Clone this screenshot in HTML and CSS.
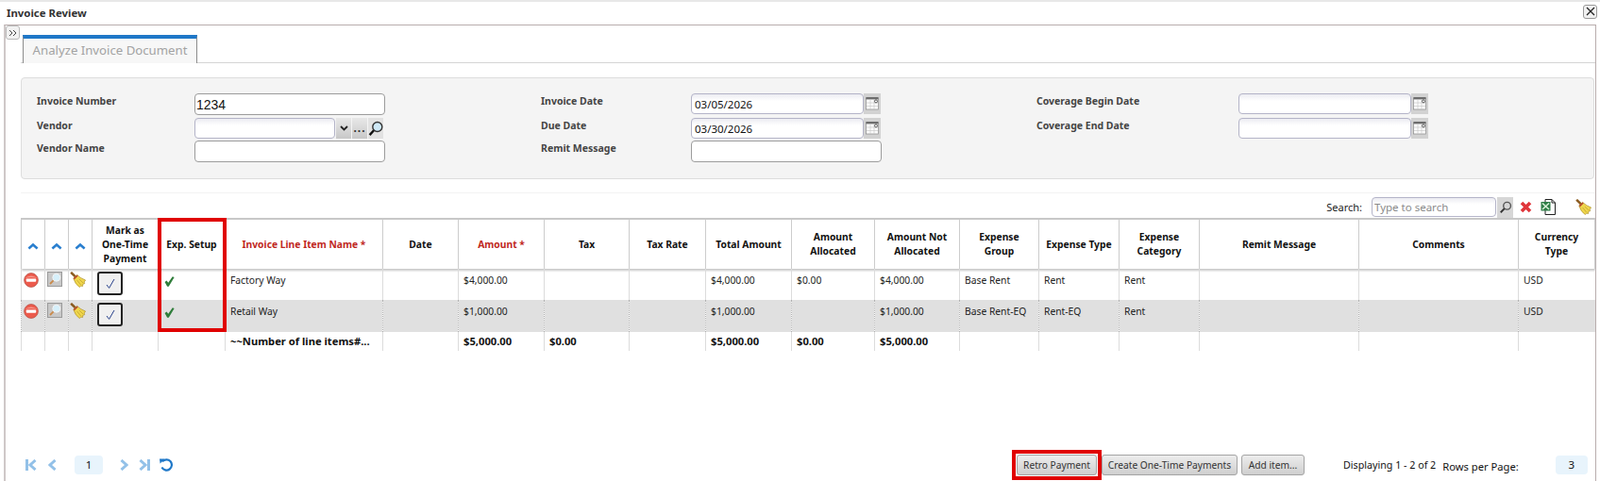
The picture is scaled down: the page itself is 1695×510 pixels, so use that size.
FILE: index.html
```html
<!DOCTYPE html>
<html lang="en">
<head>
<meta charset="utf-8">
<title>Invoice Review</title>
<link rel="stylesheet" href="styles.css">
</head>
<body>
<svg class="sprites" width="0" height="0" aria-hidden="true">
  <symbol id="broom" viewBox="0 0 18 18">
    <path d="M1.2 .8 L6.5 6" stroke="#8a5a1e" stroke-width="2.6" fill="none"/>
    <path d="M4 7.5 L8 3.6 Q12 7.5 17.6 9.6 L16 11.6 L16.6 13.4 L14.6 14 L14.4 16.4 L12.4 16 L11 17.6 Q6 14.5 4 7.5Z" fill="#efd64c" stroke="#a88a24" stroke-width=".7"/>
    <path d="M4 7.5 L8 3.6 L9.2 4.8 L5.2 8.8Z" fill="#b5432c"/>
    <path d="M8 9.5 L12.4 15 M10.5 8.5 L14.8 12.6" stroke="#b89a2c" stroke-width=".7"/>
  </symbol>
  <symbol id="minus" viewBox="0 0 16 16">
    <circle cx="8" cy="8" r="7.4" fill="#ec5a4c" stroke="#b8584e" stroke-width=".8"/>
    <path d="M1.5 6 Q8 1 14.5 6 Q8 4 1.5 6Z" fill="#f59a8e"/>
    <rect x="2.8" y="6.4" width="10.4" height="3.4" rx=".8" fill="#fff"/>
  </symbol>
  <symbol id="zoomBtn" viewBox="0 0 16 16">
    <rect x=".5" y=".5" width="15" height="15" fill="#c8c8c8" stroke="#9a9a9a"/>
    <circle cx="9.8" cy="6.2" r="4" fill="#d6f0fb" stroke="#f4f4f4" stroke-width="1"/>
    <path d="M6.6 9.4 L3 13" stroke="#c98a4a" stroke-width="1.8"/>
  </symbol>
  <symbol id="tick" viewBox="0 0 12 12">
    <path d="M.6 6.6 L2.8 5 L4.6 7.4 L9.6 .4 L11.6 1.2 L5.2 11.6 L3.4 11.6Z" fill="#2f7d3a"/>
  </symbol>
  <symbol id="up" viewBox="0 0 12 8">
    <path d="M1.4 6.4 L6 2.4 L10.6 6.4" fill="none" stroke="#2a7fcf" stroke-width="2.6"/>
  </symbol>
  <symbol id="cal" viewBox="0 0 18 22">
    <rect width="18" height="22" fill="#d2d2d2"/>
    <rect x="2.5" y="5" width="13" height="12" fill="#fbfbfb" stroke="#8a8a8a" stroke-width=".7"/>
    <rect x="2.5" y="4" width="13" height="2.4" fill="#6d6d6d"/>
    <path d="M3 10 H15 M3 13.5 H15 M7 6.4 V17 M11 6.4 V17" stroke="#c4c4c4" stroke-width=".6"/>
    <circle cx="13" cy="8.4" r="1.5" fill="#fff" stroke="#333" stroke-width=".8"/>
  </symbol>
  <symbol id="lens" viewBox="0 0 16 16">
    <circle cx="9.8" cy="6" r="4.4" fill="none" stroke="#555" stroke-width="1.6"/>
    <path d="M6.6 9.2 L2 14" stroke="#333" stroke-width="2.2"/>
  </symbol>
</svg>
<div class="app">
  <header class="titlebar">
    <span class="title">Invoice Review</span>
    <button class="close" type="button" aria-label="Close"><svg width="10" height="10" viewBox="0 0 10 10"><path d="M1 1 L9 9 M9 1 L1 9" stroke="#222" stroke-width="1.3"/></svg></button>
  </header>
  <main class="panel">
    <div class="tabstrip">
      <div class="rail"><button class="expand" type="button" aria-label="Expand"><svg width="10" height="8" viewBox="0 0 10 8"><path d="M1 1 L4 4 L1 7 M5 1 L8 4 L5 7" stroke="#444" fill="none" stroke-width="1"/></svg></button></div>
      <div class="tabrow"><div class="tab">Analyze Invoice Document</div></div>
    </div>

    <section class="form">
      <label class="lbl">Invoice Number</label>
      <div class="field"><input class="inp wide tall plain num" value="1234"></div>
      <label class="lbl">Invoice Date</label>
      <div class="field"><input class="inp date" value="03/05/2026"><svg class="calbtn"><use href="#cal"/></svg></div>
      <label class="lbl">Coverage Begin Date</label>
      <div class="field"><input class="inp date" value=""><svg class="calbtn"><use href="#cal"/></svg></div>

      <label class="lbl">Vendor</label>
      <div class="field">
        <input class="inp vendor" value="">
        <span class="addon"><svg width="9" height="6" viewBox="0 0 9 6"><path d="M1 1 L4.5 4.5 L8 1" fill="none" stroke="#222" stroke-width="1.8"/></svg></span>
        <span class="addon dots">...</span>
        <span class="addon lensbtn"><svg width="16" height="17" viewBox="0 0 16 16"><circle cx="9.8" cy="6" r="5" fill="#cfe9f7" stroke="#333" stroke-width="1.4"/><path d="M6 9.8 L1.6 14.6" stroke="#111" stroke-width="2.4"/></svg></span>
      </div>
      <label class="lbl">Due Date</label>
      <div class="field"><input class="inp date" value="03/30/2026"><svg class="calbtn"><use href="#cal"/></svg></div>
      <label class="lbl">Coverage End Date</label>
      <div class="field"><input class="inp date" value=""><svg class="calbtn"><use href="#cal"/></svg></div>

      <label class="lbl">Vendor Name</label>
      <div class="field"><input class="inp wide tall plain" value=""></div>
      <label class="lbl">Remit Message</label>
      <div class="field"><input class="inp wide tall plain" value=""></div>
    </section>

    <div class="toolbar">
      <span class="searchlbl">Search:</span>
      <input class="inp search" placeholder="Type to search">
      <span class="searchbtn"><svg width="14" height="14"><use href="#lens"/></svg></span>
      <svg class="tool-x" width="13" height="13" viewBox="0 0 13 13"><path d="M2 2 L11 11 M11 2 L2 11" stroke="#e0353a" stroke-width="3.6"/></svg>
      <svg class="tool-xls" width="17" height="17" viewBox="0 0 17 17"><path d="M5 .5 H12 L15.5 4 V16.5 H5Z" fill="#fff" stroke="#222"/><path d="M12 .5 V4 H15.5" fill="none" stroke="#222"/><rect x=".5" y="3" width="10" height="9.5" fill="#2e7d46"/><path d="M2 4.5 L9 11 M9 4.5 L2 11" stroke="#d8efd8" stroke-width="1.6"/></svg>
      <svg class="tool-broom" width="17" height="17"><use href="#broom"/></svg>
    </div>

    <div class="tablewrap">
      <table class="grid">
        <colgroup><col><col><col><col><col><col><col><col><col><col><col><col><col><col><col><col><col><col><col></colgroup>
        <thead>
          <tr>
            <th><svg class="up" width="12" height="8"><use href="#up"/></svg></th>
            <th><svg class="up" width="12" height="8"><use href="#up"/></svg></th>
            <th><svg class="up" width="12" height="8"><use href="#up"/></svg></th>
            <th>Mark as<br>One-Time<br>Payment</th>
            <th>Exp. Setup</th>
            <th class="req">Invoice Line Item Name *</th>
            <th>Date</th>
            <th class="req">Amount *</th>
            <th>Tax</th>
            <th>Tax Rate</th>
            <th>Total Amount</th>
            <th>Amount<br>Allocated</th>
            <th>Amount Not<br>Allocated</th>
            <th>Expense<br>Group</th>
            <th>Expense Type</th>
            <th>Expense<br>Category</th>
            <th>Remit Message</th>
            <th>Comments</th>
            <th>Currency<br>Type</th>
          </tr>
        </thead>
        <tbody>
          <tr class="r1">
            <td class="ic"><svg class="i-minus" width="16" height="16"><use href="#minus"/></svg></td>
            <td class="ic"><svg class="i-zoom" width="16" height="16"><use href="#zoomBtn"/></svg></td>
            <td class="ic"><svg class="i-broom" width="17" height="17"><use href="#broom"/></svg></td>
            <td class="ic"><span class="chk"><svg width="12" height="12" viewBox="0 0 12 12"><path d="M2 7 L4.6 10.4 L10 1" fill="none" stroke="#27408b" stroke-width="1"/></svg></span></td>
            <td class="ic"><svg class="i-tick" width="11" height="11"><use href="#tick"/></svg></td>
            <td>Factory Way</td><td></td><td>$4,000.00</td><td></td><td></td><td>$4,000.00</td><td>$0.00</td><td>$4,000.00</td><td>Base Rent</td><td>Rent</td><td>Rent</td><td></td><td></td><td>USD</td>
          </tr>
          <tr class="r2">
            <td class="ic"><svg class="i-minus" width="16" height="16"><use href="#minus"/></svg></td>
            <td class="ic"><svg class="i-zoom" width="16" height="16"><use href="#zoomBtn"/></svg></td>
            <td class="ic"><svg class="i-broom" width="17" height="17"><use href="#broom"/></svg></td>
            <td class="ic"><span class="chk"><svg width="12" height="12" viewBox="0 0 12 12"><path d="M2 7 L4.6 10.4 L10 1" fill="none" stroke="#27408b" stroke-width="1"/></svg></span></td>
            <td class="ic"><svg class="i-tick" width="11" height="11"><use href="#tick"/></svg></td>
            <td>Retail Way</td><td></td><td>$1,000.00</td><td></td><td></td><td>$1,000.00</td><td></td><td>$1,000.00</td><td>Base Rent-EQ</td><td>Rent-EQ</td><td>Rent</td><td></td><td></td><td>USD</td>
          </tr>
          <tr class="tot">
            <td></td><td></td><td></td><td></td><td></td>
            <td>~~Number of line items#...</td><td></td><td>$5,000.00</td><td>$0.00</td><td></td><td>$5,000.00</td><td>$0.00</td><td>$5,000.00</td><td></td><td></td><td></td><td></td><td></td><td></td>
          </tr>
        </tbody>
      </table>
      <div class="redbox"></div>
    </div>

    <footer class="footer">
      <div class="pager">
        <svg class="pg first" width="12" height="12" viewBox="0 0 12 12"><path d="M1.5 0 V12" stroke="#93c1e8" stroke-width="3"/><path d="M10.5 1 L5 6 L10.5 11" fill="none" stroke="#93c1e8" stroke-width="3"/></svg>
        <svg class="pg prev" width="9" height="12" viewBox="0 0 9 12"><path d="M7.5 1 L2 6 L7.5 11" fill="none" stroke="#93c1e8" stroke-width="3"/></svg>
        <span class="pagebox">1</span>
        <svg class="pg next" width="9" height="12" viewBox="0 0 9 12"><path d="M1.5 1 L7 6 L1.5 11" fill="none" stroke="#93c1e8" stroke-width="3"/></svg>
        <svg class="pg last" width="12" height="12" viewBox="0 0 12 12"><path d="M10.5 0 V12" stroke="#93c1e8" stroke-width="3"/><path d="M1.5 1 L7 6 L1.5 11" fill="none" stroke="#93c1e8" stroke-width="3"/></svg>
        <svg class="pg refresh" width="14" height="14" viewBox="0 0 14 14"><path d="M3 3.4 A5.6 5.6 0 1 1 2.4 9.6" fill="none" stroke="#1f78c8" stroke-width="2.2"/><path d="M0 0.6 L5.6 .6 L.6 5.6Z" fill="#1f78c8"/></svg>
      </div>
      <div class="actions">
        <span class="retrowrap"><button class="btn b-retro" type="button">Retro Payment</button><span class="redbtn"></span></span>
        <button class="btn b-create" type="button">Create One-Time Payments</button>
        <button class="btn b-add" type="button">Add item...</button>
      </div>
      <span class="display">Displaying 1 - 2 of 2</span>
      <span class="rows">Rows per Page:</span>
      <span class="pagebox size">3</span>
    </footer>
  </main>
</div>
</body>
</html>
```

FILE: styles.css
```css
* { box-sizing: border-box; }
html, body { margin: 0; padding: 0; background: #fff; }
body { font-family: "Noto Sans", "Open Sans", sans-serif; font-size: 10.3px; color: #111; overflow: hidden; }
.sprites { position: absolute; }
.app { width: 1695px; height: 510px; display: flex; flex-direction: column; border-top: 2px solid #e8e8e8; overflow: hidden; }

.titlebar { height: 24px; flex: none; display: flex; align-items: center; justify-content: space-between; padding: 0 3px 2px 7px; }
.title { font-weight: 700; font-size: 11.4px; color: #333; }
.close { width: 15px; height: 15px; padding: 0; border: 1px solid #999; border-radius: 3px; background: #f1f1f1; display: flex; align-items: center; justify-content: center; margin-bottom: 2px; }

.panel { flex: 1; margin: 0 4px; border: 1px solid #b9adad; border-bottom: 0; border-left-width: 2px; display: flex; flex-direction: column; min-height: 0; border-left-color: #cfc8c8; }

.tabstrip { display: flex; height: 40px; flex: none; }
.rail { width: 16px; flex: none; }
.expand { width: 15px; height: 15px; padding: 0; margin: 0; border: 1px solid #bbb; border-radius: 3px; background: #f2f2f2; display: flex; align-items: center; justify-content: center; }
.tabrow { flex: 1; border-bottom: 1px solid #d4d4d4; padding: 10px 0 0 2px; }
.tab { width: 185px; height: 30px; border: 1px solid #8c8c8c; border-top: 4px solid #1f78c8; border-bottom: 0; background: #f7f7f7; color: #a3a3a3; font-size: 13.2px; line-height: 25px; text-align: center; margin-bottom: -1px; position: relative; }

.form { height: 108px; flex: none; margin: 15px 0 0 16px; background: #f4f4f4; border: 1px solid #ddd; border-radius: 4px; padding: 16px 0 0 16px; display: grid; grid-template-columns: 167px 367px 159px 366px 214px 1fr; grid-template-rows: 26px 24px 24px; width: 1667px; }
.lbl { font-weight: 700; font-size: 10.5px; line-height: 16px; color: #444; }
.field { display: flex; align-items: flex-start; }
.inp { height: 22px; border: 1px solid #b4b4c8; border-radius: 4px; background: linear-gradient(#ececf2, #fff 35%); padding: 0 2px; font: 12px "Noto Sans", sans-serif; color: #111; outline: none; }
.wide { width: 202px; }
.tall { height: 23px; }
.plain { background: #fff; border-color: #9c9c9c; }
.num { font: 14px "Liberation Sans", sans-serif; padding-left: 1px; }
.date { width: 183px; font-size: 11.5px; padding-left: 3px; }
.calbtn { width: 18px; height: 22px; flex: none; }
.vendor { width: 149px; }
.addon { width: 16px; height: 22px; margin-left: 1px; background: linear-gradient(#e8e8e8, #c8c8c8); display: flex; align-items: center; justify-content: center; flex: none; }
.dots { line-height: 16px; font-weight: 700; font-size: 12px; letter-spacing: 1px; color: #333; }
.lensbtn { background: #e2e2e2; }

.toolbar { height: 27px; flex: none; margin-top: 14px; margin-left: 16px; border-top: 1px solid #f3f3f3; display: flex; align-items: center; padding-top: 3px; justify-content: flex-end; padding-right: 4px; }
.searchlbl { font-size: 11px; margin-right: 10px; color: #222; }
.search { width: 132px; height: 21px; font-size: 11.5px; }
.search::placeholder { color: #8a8a8a; opacity: 1; }
.searchbtn { width: 17px; height: 22px; background: #d6d6d6; display: flex; align-items: center; justify-content: center; margin-left: 1px; }
.tool-x { margin-left: 7px; }
.tool-xls { margin-left: 9px; }
.tool-broom { margin-left: 20px; }

.tablewrap { position: relative; margin-left: 16px; width: 1667px; flex: none; }
.grid { table-layout: fixed; width: 1666px; border-collapse: collapse; font-size: 10.3px; }
.grid col:nth-child(1) { width: 25px; }
.grid col:nth-child(2) { width: 25px; }
.grid col:nth-child(3) { width: 25px; }
.grid col:nth-child(4) { width: 70px; }
.grid col:nth-child(5) { width: 71px; }
.grid col:nth-child(6) { width: 167px; }
.grid col:nth-child(7) { width: 80px; }
.grid col:nth-child(8) { width: 91px; }
.grid col:nth-child(9) { width: 90px; }
.grid col:nth-child(10) { width: 81px; }
.grid col:nth-child(11) { width: 91px; }
.grid col:nth-child(12) { width: 88px; }
.grid col:nth-child(13) { width: 90px; }
.grid col:nth-child(14) { width: 84px; }
.grid col:nth-child(15) { width: 85px; }
.grid col:nth-child(16) { width: 85px; }
.grid col:nth-child(17) { width: 169px; }
.grid col:nth-child(18) { width: 169px; }
.grid col:nth-child(19) { width: 81px; }
.grid thead tr { height: 53px; border-top: 2px solid #c8c8c8; box-shadow: 0 2px 2px #c8c8c8; }
.grid th { border-left: 1px solid #ccc; border-right: 1px solid #ccc; padding: 0; text-align: center; vertical-align: middle; font-weight: 700; font-size: 10.3px; line-height: 15px; color: #111; }
.grid th.req { color: #c0281e; }
.up { display: block; margin: 3px auto 0; }
.grid td { padding: 5px 0 0 5px; border-left: 1px solid #dcdcdc; white-space: nowrap; overflow: hidden; color: #222; vertical-align: top; line-height: 15px; }
.grid td.ic { padding: 0; }
.r1 { height: 33px; }
.r2 { height: 34px; background: #e0e0e0; }
.r2 td { border-left: 1px dotted #b0b0b0; }
.tot { height: 20px; }
.tot td { font-weight: 700; font-size: 11.2px; color: #111; padding-top: 2px; }
.i-minus { display: block; margin: 4px 0 0 2px; }
.i-zoom { display: block; margin: 3px 0 0 2px; }
.i-broom { display: block; margin: 3px 0 0 1px; }
.i-tick { display: block; margin: 8px 0 0 6px; }
.chk { display: flex; align-items: center; justify-content: center; width: 27px; height: 25px; margin: 3px 0 0 5px; border: 2px solid #222; border-radius: 3px; background: #f0f0f0; }
.redbox { position: absolute; left: 145px; top: 0; width: 73px; height: 121px; border: 4px solid #e00000; pointer-events: none; }

.footer { flex: 1; display: flex; align-items: flex-end; padding: 0 0 6px 21px; min-height: 0; white-space: nowrap; }
.pager { display: flex; align-items: center; height: 22px; width: 1050px; flex: none; }
.pg { flex: none; }
.prev { margin-left: 12px; }
.pagebox { width: 30px; height: 20px; border-radius: 4px; background: #e8f4fc; font-size: 11.5px; color: #111; text-align: center; line-height: 20px; flex: none; }
.pager .pagebox { margin-left: 19px; }
.next { margin-left: 18px; }
.last { margin-left: 11px; }
.refresh { margin-left: 10px; }
.actions { display: flex; gap: 4px; flex: none; }
.retrowrap { position: relative; display: block; margin-right: 1px; }
.btn { height: 22px; padding: 0; border: 1px solid #a4a4a4; border-radius: 3px; background: linear-gradient(#ededed, #cfcfcf); font: 10.2px "Noto Sans", sans-serif; color: #333; white-space: nowrap; display: block; }
.b-retro { width: 85px; }
.b-create { width: 144px; }
.b-add { width: 67px; }
.redbtn { position: absolute; inset: -5px; border: 4px solid #e00000; pointer-events: none; }
.display { margin-left: 41px; font-size: 10.7px; line-height: 22px; color: #111; flex: none; }
.rows { margin-left: 7px; font-size: 11.2px; line-height: 26px; color: #111; height: 22px; flex: none; }
.size { margin: 0 0 1px 39px; width: 34px; }
```
